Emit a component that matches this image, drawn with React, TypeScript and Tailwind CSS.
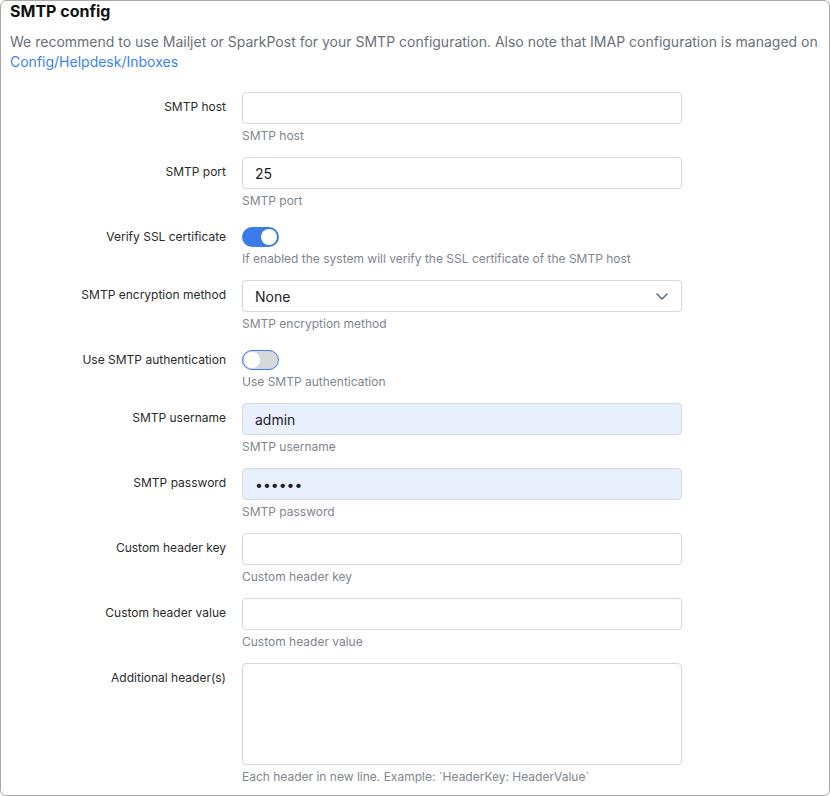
import type { ReactNode } from "react";

type FieldProps = {
    label: string;
    help: string;
    children: ReactNode;
    last?: boolean;
};

function Field({ label, help, children, last }: FieldProps) {
    return (
        <div className={`grid grid-cols-[216px_440px] gap-x-4 ${last ? "mb-[9px]" : "mb-[12px]"}`}>
            <label className="pt-[6px] text-right text-[12px] leading-[18px] text-[#2b2b2b]">
                {label}
            </label>
            <div>
                {children}
                <div className="mt-[3px] text-[12px] leading-[18px] text-[#80868e]">{help}</div>
            </div>
        </div>
    );
}

function TextInput({ value = "", filled = false }: { value?: string; filled?: boolean }) {
    return (
        <div
            className={`flex h-8 items-center rounded-[4px] border border-[#d3d7de] px-3 text-[14px] text-[#1f2328] ${filled ? "bg-[#e8f0fe]" : "bg-white"
                }`}
        >
            {value}
        </div>
    );
}

function Toggle({ on }: { on: boolean }) {
    return (
        <div className="pt-[5px]">
            {on ? (
                <div className="flex h-5 w-[37px] items-center justify-end rounded-full bg-[#3b7be9] px-[2px]">
                    <div className="h-4 w-4 rounded-full bg-white" />
                </div>
            ) : (
                <div className="flex h-5 w-[37px] items-center rounded-full border border-[#3b7be9] bg-[#d6d8dc] px-[1px]">
                    <div className="h-4 w-4 rounded-full bg-white" />
                </div>
            )}
        </div>
    );
}

export default function App() {
    return (
        <div className="h-[796px] w-[830px] overflow-hidden bg-white font-['Inter',sans-serif]">
            <div className="h-full rounded-[6px] border border-[#a9a9a9] px-[9px]">
                <h2 className="text-[16px] font-bold leading-[20px] text-[#111]">SMTP config</h2>
                <p className="mt-[11px] text-[14px] leading-[20px] text-[#6b7078]">
                    We recommend to use Mailjet or SparkPost for your SMTP configuration. Also note that IMAP configuration is managed on{" "}
                    <a className="text-[#3b82f6]">Config/Helpdesk/Inboxes</a>
                </p>

                <div className="mt-5">
                    <Field label="SMTP host" help="SMTP host">
                        <TextInput />
                    </Field>
                    <Field label="SMTP port" help="SMTP port">
                        <TextInput value="25" />
                    </Field>
                    <Field
                        label="Verify SSL certificate"
                        help="If enabled the system will verify the SSL certificate of the SMTP host"
                    >
                        <Toggle on />
                    </Field>
                    <Field label="SMTP encryption method" help="SMTP encryption method">
                        <div className="flex h-8 items-center justify-between rounded-[4px] border border-[#d3d7de] bg-white pl-3 pr-[13px] text-[14px] text-[#1f2328]">
                            <span>None</span>
                            <svg width="12" height="7" viewBox="0 0 12 7" fill="none">
                                <path d="M1 1l5 5 5-5" stroke="#4a6280" strokeWidth="1.4" strokeLinecap="round" strokeLinejoin="round" />
                            </svg>
                        </div>
                    </Field>
                    <Field label="Use SMTP authentication" help="Use SMTP authentication">
                        <Toggle on={false} />
                    </Field>
                    <Field label="SMTP username" help="SMTP username">
                        <TextInput value="admin" filled />
                    </Field>
                    <Field label="SMTP password" help="SMTP password">
                        <TextInput value="••••••" filled />
                    </Field>
                    <Field label="Custom header key" help="Custom header key">
                        <TextInput />
                    </Field>
                    <Field label="Custom header value" help="Custom header value">
                        <TextInput />
                    </Field>
                    <Field
                        label="Additional header(s)"
                        help="Each header in new line. Example: `HeaderKey: HeaderValue`"
                        last
                    >
                        <div className="h-[102px] rounded-[4px] border border-[#d3d7de] bg-white" />
                    </Field>
                </div>
            </div>
        </div>
    );
}
